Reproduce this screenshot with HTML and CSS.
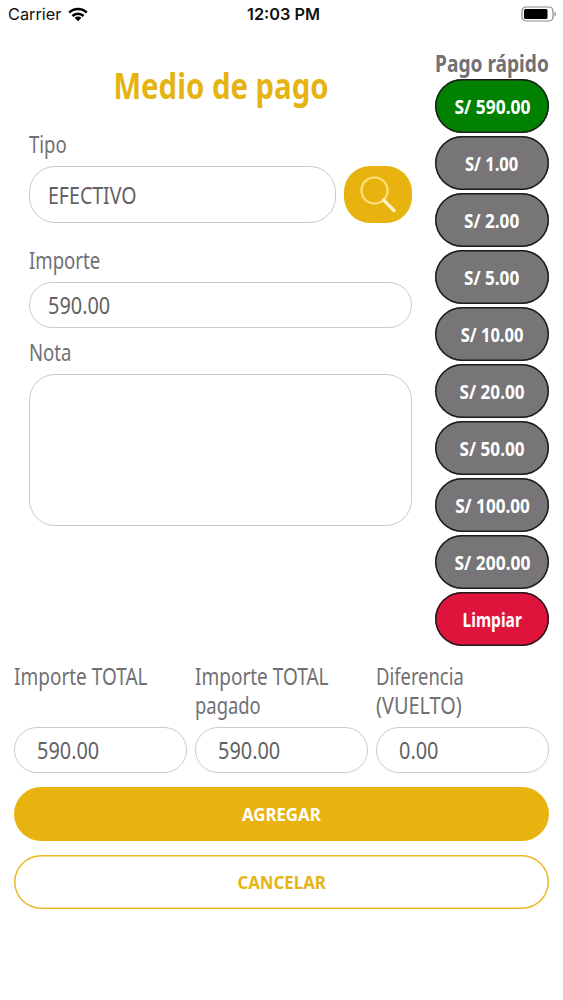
FILE: index.html
```html
<!DOCTYPE html>
<html lang="es">
<head>
<meta charset="utf-8">
<title>Medio de pago</title>
<link rel="stylesheet" href="styles.css">
</head>
<body>
<header class="status">
  <div class="carrier"><span>Carrier</span>
    <svg width="20" height="15" viewBox="0 0 20 15"><g fill="none" stroke="#000" stroke-width="2.5"><path d="M1.2 5.6a12.5 12.5 0 0 1 17.6 0"/><path d="M4.4 9a8 8 0 0 1 11.2 0"/></g><path d="M6.6 10.8a4.9 4.9 0 0 1 6.8 0L10 14.2z"/></svg>
  </div>
  <div class="clock">12:03 PM</div>
  <svg class="battery" width="36" height="16" viewBox="0 0 36 16"><rect x="1" y="1" width="31" height="14" rx="4" fill="#fff" stroke="#888" stroke-width="1.2"/><rect x="3" y="3" width="23.5" height="10" rx="1.5"/><path d="M33.5 5.5q3 2.5 0 5z" fill="#888"/></svg>
</header>
<main class="page">
  <div class="top">
    <section class="form">
      <h1 class="title"><span class="t">Medio de pago</span></h1>
      <div class="label"><span class="t">Tipo</span></div>
      <div class="type-row">
        <div class="field type"><span class="t">EFECTIVO</span></div>
        <button class="search" aria-label="Buscar"><svg width="40" height="40" viewBox="0 0 40 40" fill="none"><circle cx="16.5" cy="15.5" r="13" stroke="#fde27c" stroke-width="2.2"/><path d="M25.5 25l10.5 10.5" stroke="#fff3c4" stroke-width="3.4" stroke-linecap="round"/></svg></button>
      </div>
      <div class="label amount-label"><span class="t">Importe</span></div>
      <div class="field"><span class="t number">590.00</span></div>
      <div class="label note-label"><span class="t">Nota</span></div>
      <div class="field note"></div>
    </section>
    <aside class="quick">
      <h2 class="quick-title"><span class="t">Pago rápido</span></h2>
      <button class="pill green"><span class="t wide">S/ 590.00</span></button>
      <button class="pill"><span class="t">S/ 1.00</span></button>
      <button class="pill"><span class="t mid">S/ 2.00</span></button>
      <button class="pill"><span class="t mid">S/ 5.00</span></button>
      <button class="pill"><span class="t">S/ 10.00</span></button>
      <button class="pill"><span class="t mid">S/ 20.00</span></button>
      <button class="pill"><span class="t mid">S/ 50.00</span></button>
      <button class="pill"><span class="t mid">S/ 100.00</span></button>
      <button class="pill"><span class="t wide">S/ 200.00</span></button>
      <button class="pill red"><span class="t narrow">Limpiar</span></button>
    </aside>
  </div>
  <section class="totals">
    <div><div class="total-label"><span class="t mixed">Importe TOTAL</span></div><div class="field total"><span class="t number">590.00</span></div></div>
    <div><div class="total-label"><span class="t mixed">Importe TOTAL</span><span class="t">pagado</span></div><div class="field total"><span class="t number">590.00</span></div></div>
    <div><div class="total-label"><span class="t">Diferencia</span><span class="t number">(VUELTO)</span></div><div class="field total"><span class="t number">0.00</span></div></div>
  </section>
  <button class="action primary"><span class="t">AGREGAR</span></button>
  <button class="action outline"><span class="t">CANCELAR</span></button>
</main>
</body>
</html>
```
FILE: styles.css
```css
* { box-sizing: border-box; }
body { margin: 0; width: 563px; height: 1000px; overflow: hidden; background: #fff; color: #717073; font-family: "Noto Sans", sans-serif; }
button { font: inherit; margin: 0; padding: 0; border: 0; }
/* Condensed lettering */
.t { display: block; width: max-content; flex: none; white-space: nowrap; transform: scaleX(.8); transform-origin: left center; }
.t.mixed { transform: scaleX(.826); }
.t.number { transform: scaleX(.865); }
.status { display: grid; grid-template-columns: 1fr auto 1fr; align-items: center; height: 28px; padding: 0 6px 0 8px; font-family: Inter, sans-serif; font-size: 16.3px; color: #111; }
.carrier { display: flex; align-items: center; gap: 7px; }
.clock { font-weight: 600; padding-left: 2px; }
.battery { justify-self: end; }
.page { padding: 0 14px; }
.top { display: flex; justify-content: space-between; height: 619px; }
.form { width: 383px; margin-left: 15px; }
.title { display: flex; justify-content: center; margin: 35px 0 22px; height: 46px; line-height: 46px; font-size: 36px; font-weight: 700; color: #e6b412; }
.title .t { transform: scaleX(.815); transform-origin: center; }
.label { height: 35px; line-height: 26px; font-size: 23.5px; }
.label .t { transform: scaleX(.79); }
.type-row { display: flex; justify-content: space-between; height: 57px; }
.field { display: flex; align-items: center; height: 46px; padding-left: 18px; border: 1px solid #cacaca; border-radius: 26px; font-size: 23px; color: #626164; }
.type { width: 307px; height: 57px; }
.type .t { transform: scaleX(.85); }
.search { display: flex; align-items: center; justify-content: center; width: 68px; height: 57px; border-radius: 26px; background: #e8b30e; }
.amount-label { margin-top: 24px; }
.note-label { margin-top: 11px; }
.note { height: 152px; }
.quick { width: 114px; padding-top: 20px; }
.quick-title { display: flex; justify-content: center; margin: 0; height: 31px; line-height: 31px; font-size: 22.5px; font-weight: 700; }
.quick-title .t { transform: scaleX(.85); transform-origin: center; }
.pill { display: flex; align-items: center; justify-content: center; width: 114px; height: 54px; padding-top: 1px; margin-bottom: 3px; border-radius: 27px; box-shadow: inset 0 0 0 1.5px #1c1b1d; background: #777578; color: #fff; font-size: 19px; font-weight: 700; }
.pill .t { transform: scaleX(.87); transform-origin: center; }
.pill .mid { transform: scaleX(.9); }
.pill .wide { transform: scaleX(.915); }
.pill .narrow { transform: scaleX(.82); }
.green { background: #008200; }
.red { background: #df143d; }
.totals { display: grid; grid-template-columns: repeat(3, 1fr); gap: 8.5px; padding-top: 15px; }
.total-label { height: 65px; line-height: 29px; font-size: 23px; }
.total { padding-left: 22px; }
.action { display: flex; align-items: center; justify-content: center; width: 100%; height: 54px; margin-top: 14px; border-radius: 27px; font-size: 18.5px; font-weight: 700; padding-bottom: 2px; }
.action .t { transform: scaleX(.91); transform-origin: center; }
.primary { background: #e8b30e; color: #fff; }
.outline { background: #fff; color: #e6b412; box-shadow: inset 0 0 0 1.5px #e8b923; }
```
